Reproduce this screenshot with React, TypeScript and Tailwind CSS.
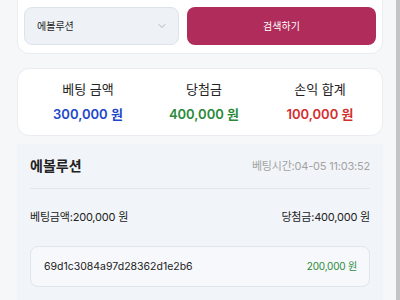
import React from 'react';
import { ChevronDown } from 'lucide-react';

const FONT = "font-['Inter','Noto_Sans_CJK_KR',sans-serif]";

const Stat: React.FC<{ label: string; amount: string; color: string }> = ({ label, amount, color }) => (
  <div className="flex flex-col items-center">
    <span className="text-[13px] leading-[18px] text-[#222]">{label}</span>
    <span className={`mt-[6px] text-[13px] leading-[20px] font-semibold ${color}`}>{amount}</span>
  </div>
);

export default function App() {
  return (
    <div className={`w-[400px] h-[300px] overflow-hidden bg-[#f6f7f9] flex ${FONT}`}>
      <div className="w-[396px] pl-[17px] pr-[13px]">
        {/* Search card */}
        <div className="-mt-[10px] pt-[16px] pb-[8px] px-[6px] bg-white border border-[#e9ecf0] rounded-b-xl flex gap-[8px]">
          <div className="w-[155px] h-[38px] rounded-lg bg-[#eef2f7] border border-[#dde3ea] flex items-center justify-between pl-[12px] pr-[10px]">
            <span className="text-[10px] text-[#222]">에볼루션</span>
            <ChevronDown className="w-[12px] h-[12px] text-[#9aa0a8]" strokeWidth={1.5} />
          </div>
          <button className="flex-1 h-[38px] rounded-lg bg-[#b02c5a] text-white text-[10px]">검색하기</button>
        </div>

        {/* Summary */}
        <div className="mt-[14px] h-[68px] bg-white border border-[#e9ecf0] rounded-xl grid grid-cols-3 pl-[12px] pr-[4px] pt-[11px]">
          <Stat label="베팅 금액" amount="300,000 원" color="text-[#1d47c9]" />
          <Stat label="당첨금" amount="400,000 원" color="text-[#2a8a39]" />
          <Stat label="손익 합계" amount="100,000 원" color="text-[#d32f2f]" />
        </div>

        {/* Detail */}
        <div className="mt-[8px] bg-[#f1f4f8] px-[13px] pt-[12px] pb-[20px]">
          <div className="flex items-center justify-between pb-[12px] border-b border-[#e3e7ec]">
            <span className="text-[14px] leading-[20px] font-semibold text-[#222]">에볼루션</span>
            <span className="text-[11px] text-[#a3a3a3] tracking-[-0.2px]">베팅시간:04-05 11:03:52</span>
          </div>
          <div className="flex items-center justify-between mt-[20px] text-[11px] leading-[16px] text-[#222] tracking-[-0.2px]">
            <span>베팅금액:200,000 원</span>
            <span>당첨금:400,000 원</span>
          </div>
          <div className="mt-[21px] h-[41px] rounded-lg border border-[#e1e6ec] bg-[#f6f8fb] flex items-center justify-between pl-[13px] pr-[12px]">
            <span className="text-[10.5px] text-[#222]">69d1c3084a97d28362d1e2b6</span>
            <span className="text-[10px] text-[#2a8a39] tracking-[-0.2px]">200,000 원</span>
          </div>
        </div>
      </div>
      <div className="w-[4px] bg-[#c4c4c4]" />
    </div>
  );
}
